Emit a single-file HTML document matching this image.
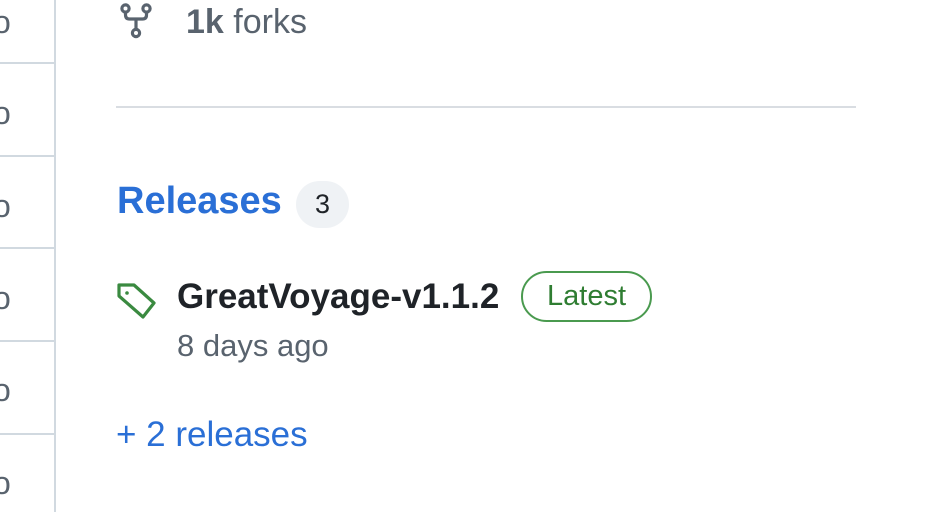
<!DOCTYPE html>
<html><head><style>
body{margin:0;width:934px;height:512px;background:#fff;position:relative;overflow:hidden;font-family:"Liberation Sans",Arial,sans-serif}
.a{position:absolute;white-space:nowrap}
.h{position:absolute;left:0;width:54px;height:2px;background:#d1d9e0}
.o{position:absolute;left:-7px;font-size:32px;color:#59636e}
</style></head><body>
<div style="position:absolute;left:54px;top:0;width:2px;height:512px;background:#d1d9e0"></div>
<div class="h" style="top:62px"></div><div class="h" style="top:155px"></div><div class="h" style="top:247px"></div><div class="h" style="top:340px"></div><div class="h" style="top:433px"></div>
<div class="o" style="top:4px">o</div><div class="o" style="top:95px">o</div><div class="o" style="top:188px">o</div><div class="o" style="top:280px">o</div><div class="o" style="top:372px">o</div><div class="o" style="top:465px">o</div>

<svg class="a" style="left:120px;top:3px" width="32" height="36" viewBox="0 0 32 36" fill="none" stroke="#59636e" stroke-width="3.2" stroke-linecap="round">
<circle cx="5.5" cy="5.5" r="3.6"/><circle cx="26.5" cy="5.5" r="3.6"/><circle cx="16" cy="30" r="3.6"/>
<path d="M5.5 9.2v2.8q0 4 4 4h13q4 0 4-4V9.2M16 16v10.2"/></svg>
<div class="a" style="left:186px;top:3px;font-size:34px;color:#59636e"><b>1k</b> forks</div>
<div class="a" style="left:116px;top:106px;width:740px;height:2px;background:#d9dde2"></div>
<div class="a" style="left:117px;top:180px;font-size:38px;font-weight:bold;color:#2a6fd6">Releases</div>
<div class="a" style="left:296px;top:181px;width:53px;height:47px;border-radius:24px;background:#eff2f5;color:#1f2328;font-size:27px;text-align:center;line-height:47px">3</div>
<svg class="a" style="left:115px;top:281px" width="44" height="40" viewBox="0 0 44 40" fill="none" stroke="#3a8a40" stroke-width="3.2" stroke-linejoin="round">
<path d="M4 4h15l20 18-11 14L4 15z"/><circle cx="12" cy="12" r="1.8" fill="#3a8a40" stroke="none"/></svg>
<div class="a" style="left:177px;top:277px;font-size:35px;font-weight:bold;color:#1f2328">GreatVoyage-v1.1.2</div>
<div class="a" style="left:521px;top:271px;width:127px;height:47px;border:2px solid #4a9a4f;border-radius:26px;color:#2f7d32;font-size:29px;text-align:center;line-height:47px">Latest</div>
<div class="a" style="left:177px;top:328px;font-size:31px;color:#59636e">8 days ago</div>
<div class="a" style="left:116px;top:415px;font-size:35px;color:#2a6fd6">+ 2 releases</div>
</body></html>
